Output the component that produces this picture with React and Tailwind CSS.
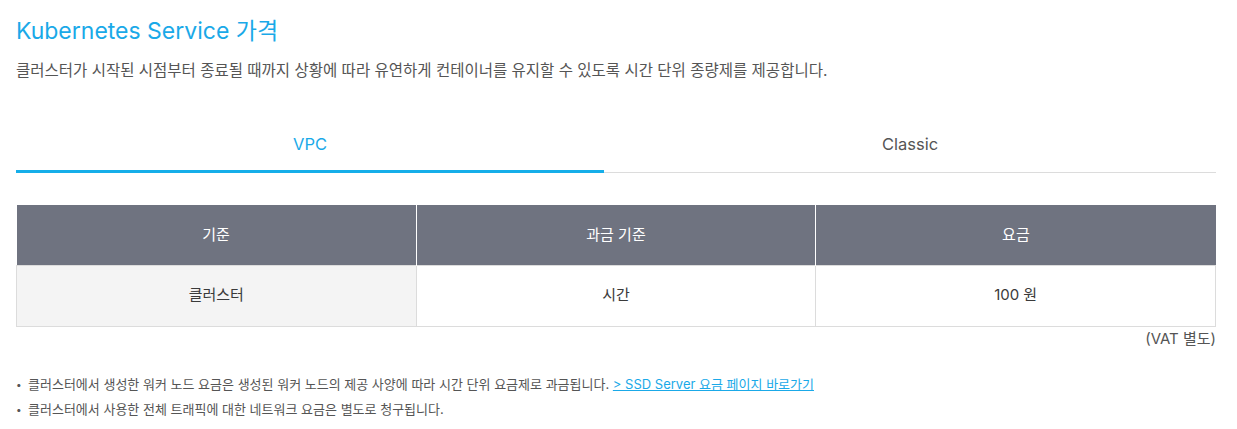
const font = { fontFamily: '"Inter", "Noto Sans CJK KR", sans-serif' };

export default function App() {
  return (
    <div className="bg-white w-[1237px] h-[429px] px-4 pt-[16px] text-[#555]" style={font}>
      <h2 className="text-[23px] leading-[30px] text-[#1aa9e8] font-normal">Kubernetes Service 가격</h2>
      <p className="mt-[15px] text-[15.5px] leading-[20px] text-[#555]">
        클러스터가 시작된 시점부터 종료될 때까지 상황에 따라 유연하게 컨테이너를 유지할 수 있도록 시간 단위 종량제를 제공합니다.
      </p>

      <div className="mt-[36px] w-[1200px] flex border-b border-[#dcdcdc]">
        <div className="w-[588px] h-[56px] pt-[2px] flex items-center justify-center text-[16.5px] text-[#1aa9e8] border-b-[3px] border-[#16aee9] -mb-px">
          VPC
        </div>
        <div className="flex-1 h-[56px] pt-[2px] flex items-center justify-center text-[16.5px] text-[#555] border-b-[3px] border-transparent -mb-px">
          Classic
        </div>
      </div>

      <table className="mt-[32px] w-[1200px] border-collapse text-[15px] table-fixed">
        <thead>
          <tr className="bg-[#6f7380] text-white h-[60px]">
            <th className="font-normal border-r border-white">기준</th>
            <th className="font-normal border-r border-white">과금 기준</th>
            <th className="font-normal">요금</th>
          </tr>
        </thead>
        <tbody>
          <tr className="h-[61px] text-[#3a3a3a]">
            <td className="font-normal text-center bg-[#f4f4f4] border border-[#dcdcdc]">클러스터</td>
            <td className="font-normal text-center border border-[#dcdcdc]">시간</td>
            <td className="font-normal text-center border border-[#dcdcdc]">100 원</td>
          </tr>
        </tbody>
      </table>
      <p className="w-[1200px] text-right text-[15px] leading-[20px] mt-[2px] text-[#555]">(VAT 별도)</p>

      <ul className="mt-[23px] text-[13px] leading-[25px] text-[#555]">
        <li className="flex">
          <span className="w-[12px] shrink-0 text-[10px]">•</span>
          <span>
            클러스터에서 생성한 워커 노드 요금은 생성된 워커 노드의 제공 사양에 따라 시간 단위 요금제로 과금됩니다.{' '}
            <a href="#" className="text-[#1aa9e8] underline">&gt; SSD Server 요금 페이지 바로가기</a>
          </span>
        </li>
        <li className="flex">
          <span className="w-[12px] shrink-0 text-[10px]">•</span>
          <span>클러스터에서 사용한 전체 트래픽에 대한 네트워크 요금은 별도로 청구됩니다.</span>
        </li>
      </ul>
    </div>
  );
}
